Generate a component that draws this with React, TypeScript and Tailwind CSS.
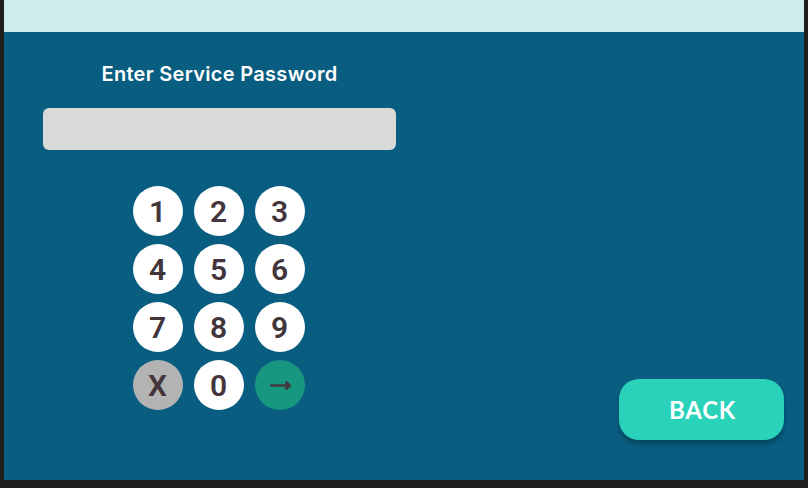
const digits = ["1", "2", "3", "4", "5", "6", "7", "8", "9"];

const keyBase =
  "flex h-[50px] w-[50px] items-center justify-center rounded-full pt-[2px] font-['Roboto',sans-serif] text-[30px] leading-none font-semibold text-[#43353c]";

export default function App() {
  return (
    <div className="h-[488px] w-[808px] overflow-hidden bg-[#1e1e1e] px-1 pb-2">
      <div className="flex h-full flex-col bg-[#085d80]">
        <header className="h-8 shrink-0 bg-[#cdecec]" />
        <main className="flex flex-1 items-start justify-between pr-5 pl-[39px]">
          <section className="flex w-[353px] flex-col items-center pt-[30px]">
            <h1 className="h-6 font-['Inter','Open_Sans',sans-serif] text-[20px] leading-6 font-semibold tracking-[0.3px] whitespace-nowrap text-white">
              Enter Service Password
            </h1>
            <div className="mt-[22px] h-[42px] w-full rounded-[6px] bg-[#d9d9d9]" />
            <div className="mt-9 mr-[2px] grid grid-cols-3 gap-x-[11px] gap-y-2">
              {digits.map((digit) => (
                <button key={digit} className={`${keyBase} bg-white`}>
                  {digit}
                </button>
              ))}
              <button className={`${keyBase} bg-[#b3b3b3]`}>X</button>
              <button className={`${keyBase} bg-white`}>0</button>
              <button className={`${keyBase} bg-[#17977f]`} aria-label="Enter">
                <svg width="24" height="12" viewBox="0 0 24 12" fill="none" stroke="currentColor">
                  <path d="M2 5.5H21" strokeWidth="2.4" />
                  <path d="M17.6 1.7L21.5 5.5L17.6 9.3" strokeWidth="2.8" />
                </svg>
              </button>
            </div>
          </section>
          <button className="mt-[347px] flex h-[61px] w-[165px] items-center justify-center rounded-[20px] bg-[#29d2b9] pt-px pl-[2px] font-['Lato','Open_Sans',sans-serif] text-[24px] leading-none font-bold tracking-[0.7px] text-white shadow-[0_4px_4px_rgba(0,0,0,0.25)]">
            BACK
          </button>
        </main>
      </div>
    </div>
  );
}
